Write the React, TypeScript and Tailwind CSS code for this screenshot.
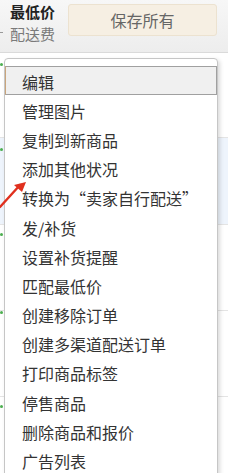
import React from 'react';

const items = [
  '编辑',
  '管理图片',
  '复制到新商品',
  '添加其他状况',
  '转换为“卖家自行配送”',
  '发/补货',
  '设置补货提醒',
  '匹配最低价',
  '创建移除订单',
  '创建多渠道配送订单',
  '打印商品标签',
  '停售商品',
  '删除商品和报价',
  '广告列表',
];

const rows = [
  { h: 'h-[85px]', bg: 'bg-white', dot: 'mt-[10px]' },
  { h: 'h-[87px]', bg: 'bg-[#eef4fc]', dot: 'mt-[10px]' },
  { h: 'h-[86px]', bg: 'bg-white', dot: 'mt-[8px]' },
  { h: 'h-[86px]', bg: 'bg-white', dot: 'mt-[0px]' },
  { h: 'h-[77px]', bg: 'bg-white', dot: 'mt-[8px]' },
];

export default function App() {
  return (
    <div
      className="relative w-[228px] h-[473px] overflow-hidden bg-white"
      style={{ fontFamily: '"Microsoft YaHei", "Noto Sans CJK SC", sans-serif' }}
    >
      {/* Header */}
      <div className="h-[53px] flex items-start bg-gradient-to-b from-[#f7f7f7] to-[#ededed] border-b border-[#dadada]">
        <div className="relative pl-[10px] pt-[2px] w-[68px]">
          <div className="text-[15px] leading-[20px] font-bold text-[#222]">最低价</div>
          <div className="text-[15px] leading-[18px] mt-[3px] text-[#7a7a7a]">配送费</div>
          <div className="absolute left-0 top-[32px] w-[3px] h-[1px] bg-[#999]" />
        </div>
        <button className="mt-[4px] w-[149px] h-[32px] rounded-[3px] bg-[#f6efe3] border border-[#ece2d0] text-[16px] text-[#666]">
          保存所有
        </button>
      </div>

      {/* Page rows behind the menu */}
      <div className="flex flex-col">
        {rows.map((r, i) => (
          <div key={i} className={`${r.h} ${r.bg} border-b border-[#e4e4e4]`}>
            <div className={`${r.dot} w-[3px] h-[3px] rounded-full bg-[#4caf50]`} />
          </div>
        ))}
      </div>

      {/* Dropdown menu */}
      <div className="absolute left-[4px] top-[58px] w-[214px] h-[430px] bg-white border border-[#c6c6c6] rounded-t-[4px] shadow-[2px_2px_4px_rgba(0,0,0,0.15)] pt-[7px]">
        {items.map((t, i) => (
          <div
            key={t}
            className={
              i === 0
                ? 'h-[29.2px] flex items-center pl-[16px] pt-[2px] text-[16px] text-[#333] bg-[#f0f0f0] border border-[#a0a0a0] border-l-[#c9a57c]'
                : 'h-[29.2px] flex items-center pl-[17px] pt-[2px] text-[16px] text-[#333]'
            }
          >
            {t}
          </div>
        ))}
      </div>

      {/* Red annotation arrow */}
      <svg className="absolute left-0 top-[176px]" width="30" height="34" viewBox="0 0 30 34">
        <line x1="0" y1="31" x2="20" y2="9" stroke="#e0301e" strokeWidth="2.4" strokeLinecap="round" />
        <polygon points="26,6 14,9 22,16" fill="#e0301e" />
      </svg>
    </div>
  );
}
